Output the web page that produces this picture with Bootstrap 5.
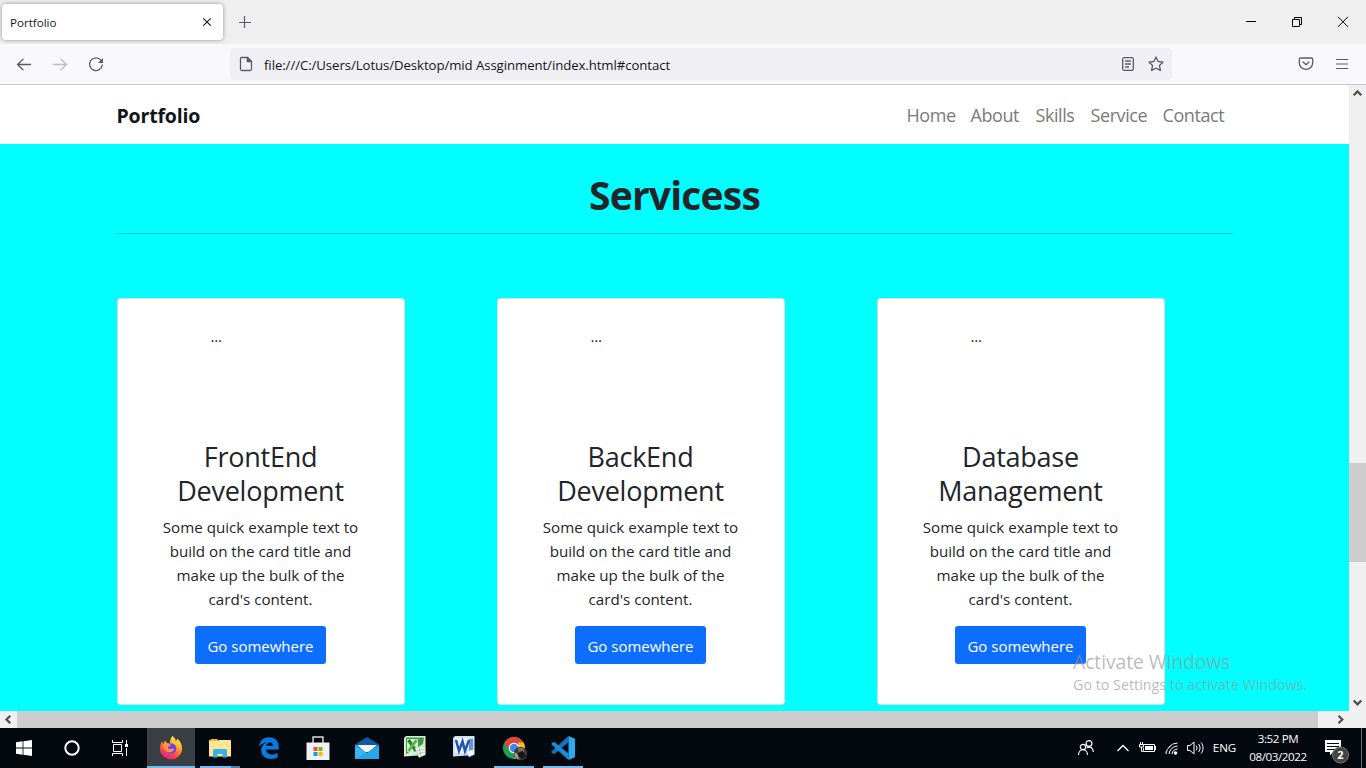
<!DOCTYPE html>
<html lang="en">
<head>
<meta charset="utf-8">
<meta name="viewport" content="width=device-width, initial-scale=1">
<title>Portfolio</title>
<link href="https://cdn.jsdelivr.net/npm/bootstrap@5.3.0/dist/css/bootstrap.min.css" rel="stylesheet">
<style>
body{font-family:"Open Sans","Noto Sans",sans-serif;width:1366px;height:768px;overflow:hidden;color:#212529}
svg{display:block;flex:none}
.tabs-row{height:44px;background:#efefef}
.tab-item{width:221px;height:36px;margin:4px 0 0 2px;border-radius:4px;background:#fff;box-shadow:0 0 4px rgba(0,0,0,.4);font-size:11.6px;color:#15141a;padding:2px 11px 0 8px}
.tab-item svg{margin-top:-2px}
.ic-line{letter-spacing:-.1px}
.tool-row{height:41px;background:#f9f9fb;border-bottom:1px solid #c9c9ce}
.url-box{width:942px;height:32px;border-radius:4px;background:#f0f0f4;color:#15141a;font-size:13.2px}
.url-text{margin-left:10px;padding-top:3px;letter-spacing:-.07px}
.view{height:626px}
.page{width:1349px;background:#0ff;overflow:hidden}
.site-nav{height:59px;background:#fff}
.site-nav .brand-text{font-size:19.5px;font-weight:700;color:#111418;letter-spacing:-.17px;padding-top:3px}
.site-nav .nav-link{font-size:18px;letter-spacing:-.42px;color:#7a7a7a;padding:0;white-space:nowrap;line-height:30px}
.site-nav a span{display:block}
.main-title{font-size:39px;font-weight:700;letter-spacing:-.8px;line-height:48px;margin:27px 0 0}
.rule{height:1px;background:rgba(33,37,41,.27);margin:14px 0 64px}
.svc{width:288px;height:407px;border:1px solid rgba(0,0,0,.14);border-radius:4px;background:#fff;padding:25px 0 0}
.svc-img{width:100px;height:100px;font-size:15.2px;letter-spacing:-.3px;line-height:24px;text-align:left;margin:0 auto 16px}
.svc h3{font-size:27px;letter-spacing:-.25px;line-height:34px;font-weight:400;margin:0 0 7px}
.svc p{font-size:15.15px;line-height:24px;margin:0 0 15px;white-space:nowrap}
.svc .btn{width:131px;height:38px;font-size:15px;border-radius:3px;padding:1px 0 0;line-height:38px;background:#0d6efd;border:0;white-space:nowrap}
.vbar{width:17px;background:#f0f0f0}
.vthumb{height:99px;background:#cdcdcd}
.hbar{height:17px;background:#f0f0f0}
.hthumb{width:1301px;background:#cdcdcd}
.taskbar{height:40px;background:#04090f;color:#fff}
.slot{width:48px;height:40px;display:flex;align-items:center;justify-content:center;position:relative}
.slot.live{background:#3a3f45}
.slot .run{position:absolute;bottom:0;left:4px;width:40px;height:2px;background:#76b9ed}
.slot.live .run{left:0;width:48px}
.tray{font-size:11.6px}
.clock{width:74px;line-height:18px;text-align:center;letter-spacing:-.4px;white-space:nowrap}
.wm{position:absolute;left:1073px;top:650px;color:rgba(150,150,150,.66);white-space:nowrap}
.wm div:first-child{font-size:19.2px;line-height:24px}
.wm div:last-child{font-size:14.3px;line-height:21px}
</style>
</head>
<body>
<div class="tabs-row d-flex">
  <div class="tab-item d-flex align-items-center justify-content-between"><span>Portfolio</span>
    <svg width="10" height="10" viewBox="0 0 10 10" stroke="#15141a" stroke-width="1.1"><path d="M1.300 1.300l7.400 7.400M8.700 1.300l-7.400 7.400"/></svg></div>
  <svg width="12" height="12" class="align-self-center ms-3" viewBox="0 0 12 12" stroke="#5b5b66" stroke-width="1.2"><path d="M5.500 0v12M0 6.500h12"/></svg>
  <div class="d-flex align-items-center ms-auto pe-3">
    <svg width="104" height="12" viewBox="0 0 104 12" fill="none" stroke="#000"><path d="M0 5.500h10M46.500 3.500h7v7h-7zM48.500 3v-1.500h7v7H54"/><path d="M92 .8l10 10M102 .8l-10 10" stroke-width="1"/></svg>
  </div>
</div>
<div class="tool-row d-flex align-items-center">
  <svg width="230" height="40" viewBox="0 0 230 40" fill="none" stroke="#5b5b66" stroke-width="1.3" stroke-linecap="round" stroke-linejoin="round"><path d="M17.500 20.500h13M23 15.200l-5.500 5.300 5.500 5.300"/><path stroke="#bdbdc3" d="M53.500 20.500h13M61 15.200l5.500 5.300-5.500 5.300"/><path d="M101 16.300a6.400 6.400 0 1 0 1.300 4.700"/><path fill="#5b5b66" stroke="none" d="M103 14v5h-5z"/></svg>
  <div class="url-box d-flex align-items-center">
    <svg class="ms-2" width="16" height="16" viewBox="0 0 16 16" fill="none" stroke="#5b5b66" stroke-width="1.3" stroke-linejoin="round"><path d="M3.500 1.500h6l4 4v7.500a1.500 1.500 0 0 1-1.500 1.500H4A1.500 1.500 0 0 1 2.500 13V2.500a1 1 0 0 1 1-1z"/><path fill="#5b5b66" d="M9.300 1.500v4h4.200z"/></svg>
    <span class="url-text text-nowrap">file:///C:/Users/Lotus/Desktop/mid Assginment/index.html#contact</span>
    <svg class="ms-auto" width="14" height="16" viewBox="0 0 14 16" fill="none" stroke="#5b5b66" stroke-width="1.3" stroke-linecap="round"><rect x="1.700" y="1.700" width="10.600" height="12.600" rx="1.600"/><path d="M4.500 5h5M4.500 8h5M4.500 11h3"/></svg>
    <svg style="margin:0 8px 0 13px" width="16" height="16" viewBox="0 0 16 16" fill="none" stroke="#5b5b66" stroke-width="1.3" stroke-linejoin="round"><path d="M8 1l2.100 4.500 5 .6-3.700 3.400 1 5L8 12.200l-4.400 2.300 1-5L.9 6.100l5-.6z"/></svg>
  </div>
  <svg class="ms-auto" width="16" height="16" viewBox="0 0 16 16" fill="none" stroke="#5b5b66" stroke-width="1.3" stroke-linecap="round" stroke-linejoin="round"><path d="M2.500 2h11a1.200 1.200 0 0 1 1.200 1.200v3.500a6.700 6.700 0 0 1-13.400 0V3.200A1.200 1.200 0 0 1 2.500 2zM5 6l3 2.800L11 6"/></svg>
  <svg style="margin:0 18px 0 22px" width="12" height="12" viewBox="0 0 12 12" stroke="#5b5b66" stroke-width="1.200"><path d="M0 1.500h12M0 6h12M0 10.500h12"/></svg>
</div>
<div class="view d-flex">
  <main class="page">
    <nav class="site-nav"><div class="container h-100 d-flex align-items-center">
      <a class="brand-text text-decoration-none me-auto" href="#"><span>Portfolio</span></a>
      <div class="nav flex-nowrap">
        <a class="nav-link" style="width:64px" href="#"><span>Home</span></a><a class="nav-link" style="width:65px" href="#"><span>About</span></a><a class="nav-link" style="width:55px" href="#"><span>Skills</span></a><a class="nav-link" style="width:72px" href="#"><span>Service</span></a><a class="nav-link" style="width:70px" href="#"><span>Contact</span></a>
      </div>
    </div></nav>
    <section class="container text-center">
      <h1 class="main-title">Servicess</h1>
      <div class="rule"></div>
      <div class="row">
        <div class="col-4"><div class="svc"><div class="svc-img">...</div><h3>FrontEnd<br>Development</h3><p>Some quick example text to<br>build on the card title and<br>make up the bulk of the<br>card's content.</p><a href="#" class="btn btn-primary">Go somewhere</a></div></div>
        <div class="col-4"><div class="svc"><div class="svc-img">...</div><h3>BackEnd<br>Development</h3><p>Some quick example text to<br>build on the card title and<br>make up the bulk of the<br>card's content.</p><a href="#" class="btn btn-primary">Go somewhere</a></div></div>
        <div class="col-4"><div class="svc"><div class="svc-img">...</div><h3>Database<br>Management</h3><p>Some quick example text to<br>build on the card title and<br>make up the bulk of the<br>card's content.</p><a href="#" class="btn btn-primary">Go somewhere</a></div></div>
      </div>
    </section>
  </main>
  <div class="vbar d-flex flex-column">
    <svg width="17" height="17" viewBox="0 0 17 17" fill="none" stroke="#505050" stroke-width="2.300"><path d="M4.700 10.300l3.800-3.800 3.800 3.800"/></svg>
    <div class="vthumb mt-auto"></div>
    <svg style="margin-top:132px" width="17" height="17" viewBox="0 0 17 17" fill="none" stroke="#505050" stroke-width="2.300"><path d="M4.700 6.500l3.800 3.800 3.800-3.800"/></svg>
  </div>
</div>
<div class="hbar d-flex">
  <svg width="17" height="17" viewBox="0 0 17 17" fill="none" stroke="#505050" stroke-width="2.300"><path d="M10.300 4.700L6.500 8.500l3.800 3.800"/></svg>
  <div class="hthumb"></div>
  <svg style="margin-left:15px" width="17" height="17" viewBox="0 0 17 17" fill="none" stroke="#505050" stroke-width="2.300"><path d="M5.500 4.700l3.800 3.800-3.800 3.800"/></svg>
</div>
<div class="taskbar d-flex">
  <div class="slot"><svg width="16" height="16" viewBox="0 0 16 16" fill="#fff"><path d="M0 2.200l6.600-.9v6.300H0zM7.400 1.200L16 0v7.600H7.400zM0 8.400h6.600v6.300L0 13.800zM7.400 8.400H16V16l-8.600-1.200z"/></svg></div>
  <div class="slot"><svg width="16" height="16" viewBox="0 0 16 16" fill="none" stroke="#fff" stroke-width="2"><circle cx="8" cy="8" r="6.700"/></svg></div>
  <div class="slot"><svg width="16" height="16" viewBox="0 0 16 16" fill="none" stroke="#fff" stroke-width="1"><path d="M.5 0v2.500h10V0M.5 16v-2.500h10V16M1.500 4.500h8v7h-8zM14.500 0v4M14.500 8v8"/><path fill="#fff" stroke="none" d="M13 4h3v3h-3z"/></svg></div>
  <div class="d-flex" style="margin-left:3px;gap:1px">
    <div class="slot live"><svg width="24" height="24" viewBox="0 0 24 24"><defs><linearGradient id="ff" x1=".8" y1="0" x2=".3" y2="1"><stop offset="0" stop-color="#fff44f"/><stop offset=".35" stop-color="#ffb52b"/><stop offset=".65" stop-color="#ff5a35"/><stop offset="1" stop-color="#e31587"/></linearGradient></defs><path fill="url(#ff)" d="M13.500 0c2 1.500 3 3 3.300 5 1-.5 1.500-1.600 1.400-2.500C21.500 5.500 23 8.500 23 12.500 23 18.800 18 23.500 12 23.500S1 18.800 1 12.800c0-3 .7-5.300 2.200-7.500L4 8l2.300-3.500L8 7.200l3 .3C11 4.500 11.500 2 13.500 0z"/><circle cx="12" cy="12.500" r="5.300" fill="#7542e5"/><path fill="#ff9640" d="M4 8.500l4.500-1 3.500 1.300c-.2 1.300-2.500 1.300-3 2.200 0 2 1 2.500 3 2.200 1.500-.3 2.300-.6 3.100 0-1 2.500-3.500 3.600-6 2.900C6 15.200 4 12 4 8.500z"/></svg><i class="run"></i></div>
    <div class="slot"><svg width="22" height="20" viewBox="0 0 22 20"><path fill="#e9b636" d="M0 2h1.500L2 1h6l1 1h11v2H0z"/><path fill="#ffe594" d="M0 3h10l1-1h10a1 1 0 0 1 1 1v15.500H0z"/><path fill="#35b2ea" d="M4 19.500v-7A1.500 1.500 0 0 1 5.500 11h11a1.500 1.500 0 0 1 1.500 1.500v7h-4.500V16h-5v3.500z"/></svg><i class="run"></i><i class="run" style="left:35px;width:9px;background:#527fa5"></i></div>
    <div class="slot"><svg width="20" height="22" viewBox="0 0 20 22" fill="#0a7ade"><path d="M0 9.500C1 3.500 5 .3 10 .3c6.300 0 9.800 4.300 9.800 10v2.200H7c.1 3.500 3 5 6.300 5 2 0 4-.6 5.400-1.500v4.300C17 21.300 14.500 22 12 22 6 22 2.200 18.500 2.200 13.600c0-3.600 2-6.700 5.200-8.200C4.600 5.600 1.800 7 0 9.500zM7.200 8.700h7c-.1-2-1.200-3.300-3.300-3.300-2 0-3.300 1.300-3.700 3.300z"/></svg></div>
    <div class="slot"><svg width="24" height="24" viewBox="0 0 24 24"><path fill="none" stroke="#ddd" stroke-width="1.400" d="M7 7V1h10v6"/><path fill="#f1f1f1" d="M.5 6.500h23V24H.5z"/><path fill="#f25022" d="M7.500 11h4v4h-4z"/><path fill="#7fba00" d="M12.500 11h4v4h-4z"/><path fill="#00a4ef" d="M7.500 16h4v4h-4z"/><path fill="#ffb900" d="M12.500 16h4v4h-4z"/></svg></div>
    <div class="slot"><svg width="24" height="24" viewBox="0 0 24 24"><path fill="#0b5aa6" d="M0 8.500L12 1l12 7.500V14H0z"/><path fill="#f5f5f5" d="M2 9h20l-8 7h-4z"/><path fill="#36b7f5" d="M0 9l12 8 12-8v14H0z"/><path fill="#1c8ee0" d="M24 23V9L0 23z" opacity=".45"/></svg></div>
    <div class="slot"><svg width="22" height="22" viewBox="0 0 22 22" style="margin:-3px 2px 0 0"><path fill="#d9efd4" d="M2 0h19.500v19L0 20.500V2z"/><path fill="#3c9a46" d="M2 1.500h18L19 8 2 18z"/><path fill="#d8eed2" d="M3 3h11v13H3z"/><path fill="none" stroke="#258338" stroke-width="3.200" d="M4.500 4l7.500 11"/><path fill="none" stroke="#63b346" stroke-width="2.800" d="M12.500 4l-8 11"/><path fill="#fff" stroke="#91c69a" stroke-width=".6" d="M11 12l10-2v9l-6 2.500z"/><path stroke="#73b37e" stroke-width=".7" d="M13 15l7-2M14 18l6-2M15 12l2 8"/></svg></div>
    <div class="slot"><svg width="22" height="22" viewBox="0 0 22 22" style="margin:-3px 2px 0 0"><path fill="#cfe2f5" d="M2 0h19.500v19L0 20.500V2z"/><path fill="#5e96d6" d="M16 3h4v12h-4z"/><path fill="#f0f6fd" d="M2 2h14v15H2z"/><path fill="none" stroke="#1f55ae" stroke-width="2.500" d="M3 4l3 11 3.500-9.500L12 15l4-11"/><path fill="#fff" stroke="#8db1dc" stroke-width=".6" d="M13 15l8-1.500v5l-5 2.500z"/></svg></div>
    <div class="slot"><svg width="26" height="26" viewBox="0 0 26 26" style="margin-left:2px"><circle cx="12" cy="13" r="11" fill="#1a9f53"/><path fill="#ea4335" d="M2.500 7.500a11 11 0 0 1 19 0L12 8.300l-4.500 7z"/><path fill="#fbc116" d="M21.500 7.500A11 11 0 0 1 12 24l5-8-1-8.500z"/><circle cx="12" cy="13" r="5.300" fill="#fff"/><circle cx="12" cy="13" r="4.200" fill="#4285f4"/><circle cx="18.500" cy="18.500" r="6.700" fill="#3d3837"/><path fill="#806b61" d="M16 13l5-.5 1.500 4-3 3.500-3-2z"/><path fill="#a5a09c" d="M12.300 17l3 2 2 5.500c-3-.5-5-3-5-7.500z"/><path fill="#171515" d="M17 17l4-1 1 2 2 3-4 3-4-4z"/></svg><i class="run"></i></div>
    <div class="slot"><svg width="24" height="24" viewBox="0 0 24 24"><path fill="#0a78c4" d="M17.500 0v6.300L3 18.200.5 16.500v-1z"/><path fill="#168fd8" d="M17.500 24v-6.500L3 5.800.5 7.500v1z"/><path fill="#2aaaf2" d="M17.500 0L24 2.800v18.400L17.500 24z"/></svg><i class="run"></i></div>
  </div>
  <div class="tray d-flex align-items-center ms-auto" style="margin-right:4px">
    <svg width="37" height="24" viewBox="0 0 37 24" fill="none" stroke="#fff" stroke-width="1.200"><circle cx="9" cy="11" r="2.700"/><path d="M4.500 19c0-7 9-7 9 0"/><circle cx="15" cy="7.500" r="2.900"/><path d="M12.800 11.800c3-1.800 6.500-.3 6.500 4.200"/></svg>
    <svg width="24" height="24" viewBox="0 0 24 24" fill="none" stroke="#fff" stroke-width="1.300"><path d="M6.500 15l5.500-5.500 5.500 5.500"/></svg>
    <svg width="24" height="24" viewBox="0 0 24 24" fill="none" stroke="#fff"><path d="M9 8.500h10.500v7H8.500V12M5.500 6v2.500M7.500 6v2.500M4.500 8.500h4v2.500h-4zM6.500 11v4.500H8M20.500 10v4"/><path fill="#fff" stroke="none" d="M10 10h8v4h-8z"/></svg>
    <svg width="25" height="24" viewBox="0 0 25 24" fill="none" stroke="#fff" stroke-width="1"><path d="M7 18A12 12 0 0 1 18.500 7M10 18A9 9 0 0 1 18.500 10M13 18a6 6 0 0 1 5.500-5"/><path stroke="#999" d="M7 17.500V15l7-7"/><circle cx="16.500" cy="17" r="1.800" fill="#fff" stroke="none"/></svg>
    <svg width="24" height="24" viewBox="0 0 24 24" fill="none" stroke="#fff" stroke-width="1"><path d="M3.500 9.500h2.500l4-3.500v12l-4-3.500H3.500zM12 9.500c1.300 1.500 1.300 3.500 0 5M14.500 8c2 2.500 2 5.500 0 8M17 6.500c2.700 3 2.700 8 0 11"/></svg>
    <div style="width:33px" class="text-center ic-line">ENG</div>
    <div class="clock"><div>3:52 PM</div><div>08/03/2022</div></div>
    <svg width="47" height="40" viewBox="0 0 47 40"><path fill="#fff" d="M10 12h16v12H18l-3 3.500V24h-5z"/><path stroke="#04090f" d="M12 15.500h12M12 18.500h12M12 21.500h8"/><circle cx="25.500" cy="27" r="8" fill="#444" stroke="#777"/><text x="25.500" y="31" text-anchor="middle" font-size="11" font-weight="700" fill="#fff">2</text><path stroke="#6b6e72" d="M46.500 0v40"/></svg>
  </div>
</div>
<div class="wm"><div>Activate Windows</div><div>Go to Settings to activate Windows.</div></div>
<script src="https://cdn.jsdelivr.net/npm/bootstrap@5.3.0/dist/js/bootstrap.bundle.min.js"></script>
</body>
</html>
